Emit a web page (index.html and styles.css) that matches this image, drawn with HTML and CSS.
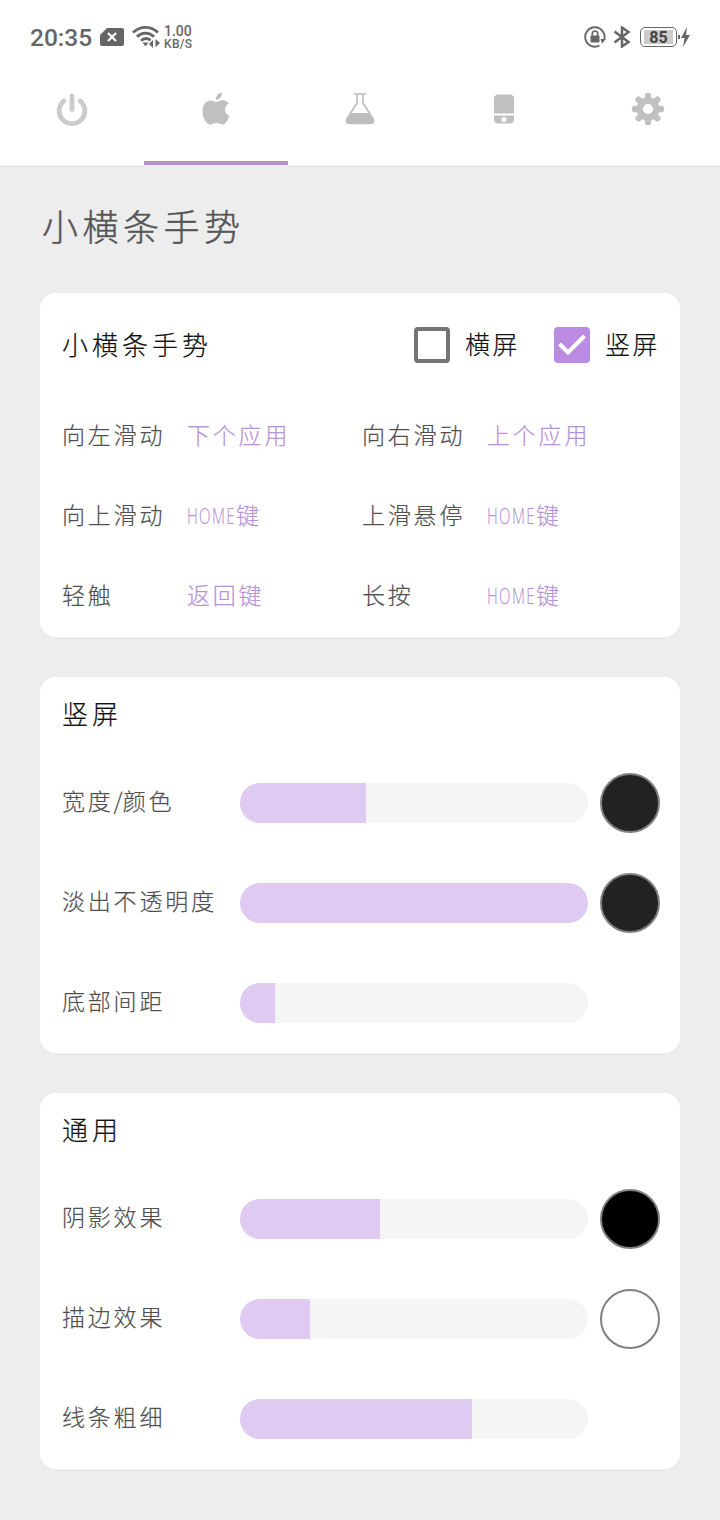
FILE: index.html
```
<!DOCTYPE html>
<html lang="zh-CN">
<head>
    <meta charset="UTF-8">
    <meta name="viewport" content="width=device-width, initial-scale=1.0">
    <title>小横条手势</title>
    <link rel="stylesheet" href="styles.css">
</head>
<body>
    <header class="header">
        <div class="status-bar">
            <div class="status-left">
                <span class="clock">20:35</span>
                <svg class="icon-sim" width="24" height="18" viewBox="0 0 24 18">
                    <path d="M7 0H22a2 2 0 0 1 2 2V16a2 2 0 0 1-2 2H2a2 2 0 0 1-2-2V7z" fill="#666"/>
                    <path d="M8 5l8 8M16 5l-8 8" stroke="#fff" stroke-width="2.2"/>
                </svg>
                <svg class="icon-wifi" width="30" height="24" viewBox="0 0 30 24">
                    <g fill="none" stroke="#666" stroke-width="2.8">
                        <path d="M1 7.500C8 .6 19 .6 26 7.500"/>
                        <path d="M5 11.800C10 7 17 7 22 11.800"/>
                        <path d="M9 15.800C12 13 15.500 13 18.500 15.300"/>
                    </g>
                    <path d="M10.500 17.500h6l-3 4zM17 19l4-4v8zM23.500 14l4.500 4-4.500 4z" fill="#666"/>
                </svg>
                <div class="net-speed">
                    <span class="speed-value">1.00</span>
                    <span class="speed-unit">KB/S</span>
                </div>
            </div>
            <div class="status-right">
                <svg width="22" height="22" viewBox="0 0 22 22">
                    <path d="M15.500 19.500A9.700 9.700 0 1 1 20.400 13" fill="none" stroke="#666" stroke-width="1.900"/>
                    <path d="M16.500 13h5.500l-4 4.500z" fill="#666"/>
                    <rect x="6.500" y="9.500" width="9" height="7" rx="1" fill="#666"/>
                    <path d="M8.300 10V7.700a2.700 2.700 0 0 1 5.400 0V10" fill="none" stroke="#666" stroke-width="1.700"/>
                </svg>
                <svg class="icon-bluetooth" width="18" height="22" viewBox="0 0 18 22">
                    <path d="M1.500 5.500L15.500 16 9 20.500V1.500L15.500 6 1.500 16.500" fill="none" stroke="#666" stroke-width="2.500"/>
                </svg>
                <div class="battery"><span class="battery-level">85</span></div>
                <svg class="icon-charge" width="12" height="20" viewBox="0 0 12 20">
                    <path d="M0 8h2v4H0z" fill="#666"/>
                    <path d="M9 0L3 11h3.500L5 20l7-12H8z" fill="#666"/>
                </svg>
            </div>
        </div>
        <nav class="tabs">
            <a class="tab">
                <svg width="32" height="34" viewBox="0 0 32 34">
                    <g fill="none" stroke="#cbcbcb" stroke-width="4.800" stroke-linecap="round">
                        <path d="M7.800 9A12.800 12.800 0 1 0 24.200 9"/>
                        <path d="M16 4V17.500"/>
                    </g>
                </svg>
            </a>
            <a class="tab active">
                <svg width="28" height="34" viewBox="0 0 28 34">
                    <path d="M20 .5C20.400 4.200 17.300 8 13.700 7.800 13.400 4.300 16.600 1 20 .5z" fill="#c0c0c0"/>
                    <path d="M14 10C16 10 17.500 8.300 20.500 8.300c2.700 0 4.900 1.300 6.200 3.300-5.300 3.200-4.500 10.200.8 12.300-1.300 3.400-4 8.600-7 8.600-2.400 0-3.300-1.500-6.200-1.500s-4 1.500-6.200 1.500C4.200 32.500.5 25.500.5 19.200.5 12 4.500 8.400 8.500 8.400c2.500 0 4.100 1.600 5.500 1.600z" fill="#c0c0c0"/>
                </svg>
            </a>
            <a class="tab">
                <svg width="30" height="34" viewBox="0 0 30 34">
                    <path d="M9 2H21M12 2.500V11L1.800 27C.6 29.600 2 31.500 4.500 31.500H25.500C28 31.500 29.400 29.600 28.200 27L18 11V2.500" fill="none" stroke="#bdbdbd" stroke-width="1.600"/>
                    <path d="M6 21H24L28.500 28c1 2.500 0 4-2.500 4H4C1.500 32 .5 30.500 1.500 28z" fill="#bdbdbd"/>
                </svg>
            </a>
            <a class="tab">
                <svg width="20" height="34" viewBox="0 0 20 34">
                    <path d="M0 21.500V7Q0 2.500 4.500 2.500H15.500Q20 2.500 20 7V21.500z" fill="#c0c0c0"/>
                    <path d="M0 23.500H20V27Q20 31.500 15.500 31.500H4.500Q0 31.500 0 27z" fill="#c0c0c0"/>
                    <circle cx="10" cy="27.500" r="2.500" fill="#fff"/>
                </svg>
            </a>
            <a class="tab">
                <svg width="34" height="34" viewBox="-17 -17 34 34">
                    <g stroke="#c0c0c0" stroke-width="6.500" stroke-linecap="round">
                        <path d="M0-13V13M-13 0H13M-9.300-9.300L9.300 9.300M-9.300 9.300L9.300-9.300"/>
                    </g>
                    <circle r="11.500" fill="#c0c0c0"/>
                    <circle r="5" fill="#fff"/>
                </svg>
            </a>
        </nav>
    </header>

    <main class="content">
        <h1 class="page-title">小横条手势</h1>

        <section class="card">
            <div class="card-header">
                <h2 class="card-title">小横条手势</h2>
                <div class="checks">
                    <label class="check">
                        <span class="box"></span>
                        <span class="check-text">横屏</span>
                    </label>
                    <label class="check">
                        <span class="box checked">
                            <svg width="36" height="36" viewBox="0 0 36 36">
                                <path d="M5.500 17L14 25.500 30.500 9" fill="none" stroke="#fff" stroke-width="4"/>
                            </svg>
                        </span>
                        <span class="check-text">竖屏</span>
                    </label>
                </div>
            </div>
            <div class="gestures">
                <span class="label">向左滑动</span>
                <span class="action">下个应用</span>
                <span class="label">向右滑动</span>
                <span class="action">上个应用</span>

                <span class="label">向上滑动</span>
                <span class="action"><span class="latin">HOME</span>键</span>
                <span class="label">上滑悬停</span>
                <span class="action"><span class="latin">HOME</span>键</span>

                <span class="label">轻触</span>
                <span class="action">返回键</span>
                <span class="label">长按</span>
                <span class="action"><span class="latin">HOME</span>键</span>
            </div>
        </section>

        <section class="card">
            <h2 class="card-title section-title">竖屏</h2>
            <div class="row">
                <span class="label">宽度<span class="slash">/</span>颜色</span>
                <div class="slider"><div class="fill" style="width: 126px"></div></div>
                <span class="swatch dark"></span>
            </div>
            <div class="row">
                <span class="label">淡出不透明度</span>
                <div class="slider"><div class="fill" style="width: 348px"></div></div>
                <span class="swatch dark"></span>
            </div>
            <div class="row">
                <span class="label">底部间距</span>
                <div class="slider"><div class="fill" style="width: 35px"></div></div>
            </div>
        </section>

        <section class="card">
            <h2 class="card-title section-title">通用</h2>
            <div class="row">
                <span class="label">阴影效果</span>
                <div class="slider"><div class="fill" style="width: 140px"></div></div>
                <span class="swatch black"></span>
            </div>
            <div class="row">
                <span class="label">描边效果</span>
                <div class="slider"><div class="fill" style="width: 70px"></div></div>
                <span class="swatch white"></span>
            </div>
            <div class="row">
                <span class="label">线条粗细</span>
                <div class="slider"><div class="fill" style="width: 232px"></div></div>
            </div>
        </section>
    </main>
</body>
</html>
```
FILE: styles.css
```
:root {
    --accent: #b992d8;
    --accent-light: #dfcbf2;
    --page-bg: #ededed;
    --status: #666666;
    --label: #505050;
}

* {
    margin: 0;
    padding: 0;
    box-sizing: border-box;
}

body {
    background-color: var(--page-bg);
    font-family: "Noto Sans CJK SC", sans-serif;
    font-weight: 300;
    min-height: 100vh;
}

svg {
    display: block;
}

.header {
    background-color: #fff;
    height: 165px;
}

.status-bar {
    display: flex;
    justify-content: space-between;
    height: 74px;
    padding: 0 30px;
    color: var(--status);
    font-family: Roboto, sans-serif;
}

.status-left,
.status-right {
    display: flex;
    align-items: center;
}

.clock {
    width: 70px;
    padding-top: 1px;
    font-size: 24.5px;
    font-weight: 500;
}

.icon-wifi {
    margin-left: 8px;
}

.net-speed {
    display: flex;
    flex-direction: column;
    margin-left: 2px;
    padding-top: 2px;
    font-size: 14px;
    font-weight: 500;
    line-height: 13px;
}

.speed-unit {
    font-size: 12px;
    letter-spacing: 0.3px;
}

.icon-bluetooth {
    margin: 0 9px 0 7px;
}

.battery {
    width: 37px;
    height: 20px;
    padding: 2px;
    border: 1.5px solid var(--status);
    border-radius: 5px;
}

.battery-level {
    display: block;
    width: 29px;
    height: 100%;
    margin-left: 1px;
    background-color: #ccc;
    color: #444;
    font-size: 16px;
    font-weight: 700;
    line-height: 15px;
    text-align: center;
}

.icon-charge {
    margin-left: 1px;
}

.tabs {
    display: grid;
    grid-template-columns: repeat(5, 1fr);
    height: 91px;
}

.tab {
    display: flex;
    justify-content: center;
    padding-top: 18px;
}

.tab.active {
    border-bottom: 4px solid #b493d0;
}

.content {
    padding: 0 40px;
}

.page-title {
    height: 128px;
    padding-left: 2px;
    color: #555;
    font-size: 36px;
    font-weight: 300;
    letter-spacing: 4.5px;
    line-height: 121px;
    -webkit-text-stroke: 0.4px;
}

.card {
    margin-bottom: 40px;
    padding: 0 20px 0 22px;
    background-color: #fff;
    border-radius: 16px;
}

.card-header {
    display: flex;
    justify-content: space-between;
    align-items: center;
    height: 104px;
}

.card-title {
    padding-bottom: 4px;
    color: #111;
    font-size: 26px;
    font-weight: 300;
    letter-spacing: 4px;
    -webkit-text-stroke: 0.2px;
}

.section-title {
    height: 76px;
    line-height: 71px;
}

.checks {
    display: flex;
    gap: 34px;
}

.check {
    display: flex;
    align-items: center;
    gap: 15px;
    color: #111;
    font-size: 25px;
    letter-spacing: 2.5px;
}

.check-text {
    padding-bottom: 4px;
    -webkit-text-stroke: 0.2px;
}

.box {
    width: 36px;
    height: 36px;
    border: 4px solid #757575;
    border-radius: 4px;
}

.box.checked {
    border: none;
    background-color: #b98ce2;
}

.gestures {
    display: grid;
    grid-template-columns: 125px 175px 125px 1fr;
    grid-auto-rows: 80px;
    align-items: center;
}

.label,
.action {
    padding-bottom: 6px;
    font-size: 23px;
    letter-spacing: 2.8px;
    white-space: nowrap;
    -webkit-text-stroke: 0.2px;
}

.label {
    color: var(--label);
}

.action {
    color: var(--accent);
}

.latin {
    display: inline-block;
    width: 49px;
    font-family: "Open Sans", sans-serif;
    font-size: 22px;
    letter-spacing: 2px;
    line-height: 1;
    transform: scaleX(0.68);
    transform-origin: left;
}

.slash {
    letter-spacing: 0;
}

.row {
    display: flex;
    align-items: center;
    height: 100px;
}

.row .label {
    width: 178px;
}

.slider {
    width: 348px;
    height: 40px;
    border-radius: 20px;
    background-color: #f5f5f5;
    overflow: hidden;
}

.fill {
    height: 100%;
    background-color: var(--accent-light);
}

.swatch {
    width: 60px;
    height: 60px;
    margin-left: 12px;
    border: 2px solid #808080;
    border-radius: 50%;
}

.dark {
    background-color: #222;
}

.black {
    background-color: #000;
}

.white {
    background-color: #fff;
}
```
